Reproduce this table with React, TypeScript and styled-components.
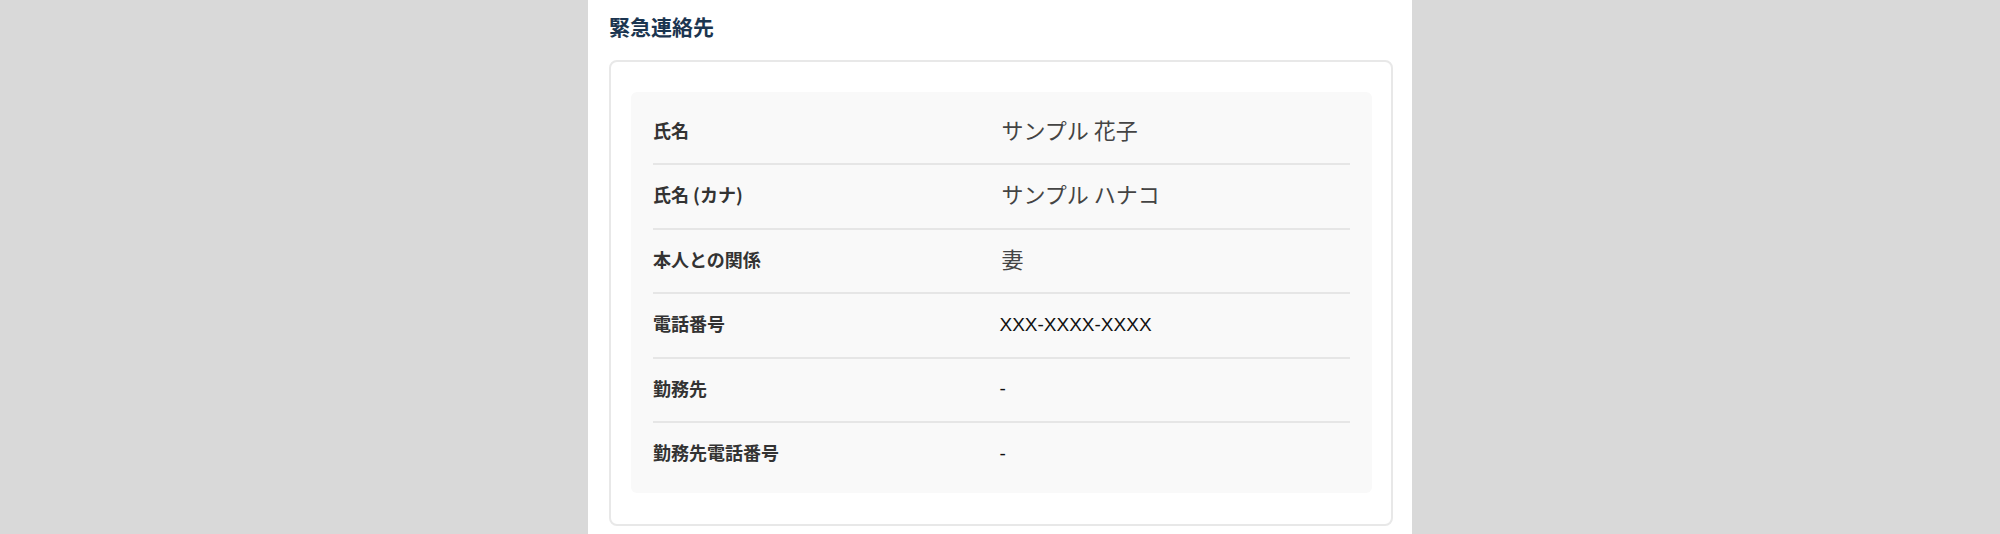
import styled, { createGlobalStyle } from 'styled-components';

const GlobalStyle = createGlobalStyle`
  html, body {
    margin: 0;
    padding: 0;
    background: #d9d9d9;
    font-family: "Noto Sans CJK JP", "Noto Sans", sans-serif;
  }
`

type Row = { label: string; value: string; plain?: boolean }

const rows: Row[] = [
  { label: '氏名', value: 'サンプル 花子' },
  { label: '氏名 (カナ)', value: 'サンプル ハナコ' },
  { label: '本人との関係', value: '妻' },
  { label: '電話番号', value: 'XXX-XXXX-XXXX', plain: true },
  { label: '勤務先', value: '-', plain: true },
  { label: '勤務先電話番号', value: '-', plain: true },
]

export default function App() {
  return (
    <>
      <GlobalStyle />
      <Page>
        <Panel>
          <Title>緊急連絡先</Title>
          <Card>
            <Table>
              {rows.map((r) => (
                <TableRow key={r.label}>
                  <Label>{r.label}</Label>
                  <Value $plain={r.plain}>{r.value}</Value>
                </TableRow>
              ))}
            </Table>
          </Card>
        </Panel>
      </Page>
    </>
  )
}

const Page = styled.div`
  display: flex;
  justify-content: center;
  min-height: 534px;
`

const Panel = styled.section`
  width: 824px;
  box-sizing: border-box;
  background: #fff;
  padding: 11px 19px 10px 21px;
`

const Title = styled.h2`
  margin: 0 0 19px;
  font-size: 21px;
  line-height: 30px;
  font-weight: 700;
  color: #1b3550;
`

const Card = styled.div`
  border: 2px solid #e8e8e8;
  border-radius: 8px;
  padding: 30px 19px 31px 20px;
`

const Table = styled.div`
  background: #f9f9f9;
  border-radius: 6px;
  padding: 8.5px 22px 7.5px;
`

const TableRow = styled.div`
  display: grid;
  grid-template-columns: 1fr 1fr;
  align-items: center;
  box-sizing: border-box;
  height: 64.5px;
  padding-bottom: 4px;
  border-bottom: 2px solid #e6e6e6;

  &:last-child {
    height: 62.5px;
    border-bottom: none;
  }
`

const Label = styled.div`
  font-size: 18px;
  font-weight: 700;
  color: #333;
`

const Value = styled.div<{ $plain?: boolean }>`
  font-size: ${(p) => (p.$plain ? '19px' : '22px')};
  font-family: ${(p) => (p.$plain ? '"Liberation Sans", Arial' : '"Noto Sans CJK JP"')}, sans-serif;
  color: ${(p) => (p.$plain ? '#111' : '#444')};
  margin-left: ${(p) => (p.$plain ? '-2px' : '0')};
  padding-top: ${(p) => (p.$plain ? '3px' : '0')};
  margin-top: ${(p) => (p.$plain ? '0' : '-2px')};
`
